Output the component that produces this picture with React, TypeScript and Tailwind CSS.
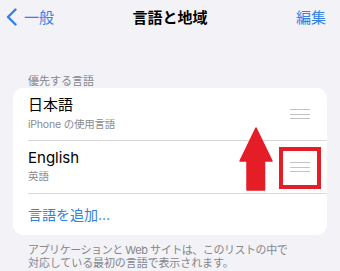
import React from 'react';

const font = { fontFamily: '"Inter", "Noto Sans CJK JP", sans-serif' };

function Handle() {
  return (
    <div className="flex w-[20px] flex-col gap-[3.5px]">
      <div className="h-[1px] bg-[#c4c4c8]" />
      <div className="h-[1px] bg-[#c4c4c8]" />
      <div className="h-[1px] bg-[#c4c4c8]" />
    </div>
  );
}

export default function App() {
  return (
    <div
      className="relative h-[271px] w-[340px] overflow-hidden bg-[#f2f2f7] text-black"
      style={font}
    >
      {/* ナビゲーションバー */}
      <header className="relative flex h-[34px] items-center justify-between pl-[6px] pr-[14px]">
        <div className="flex items-center gap-[6px] text-[#3380e6]">
          <svg width="12" height="18" viewBox="0 0 12 18" fill="none">
            <path d="M9.5 1.5 L2 9 L9.5 16.5" stroke="#3380e6" strokeWidth="2.4" strokeLinecap="round" strokeLinejoin="round" />
          </svg>
          <span className="text-[15px] leading-none">一般</span>
        </div>
        <h1 className="absolute left-1/2 -translate-x-1/2 text-[15px] font-bold leading-none">言語と地域</h1>
        <span className="text-[15px] leading-none text-[#3380e6]">編集</span>
      </header>

      {/* 優先する言語 */}
      <div className="mt-[40px] pl-[28px] text-[11px] leading-[14px] text-[#86868b]">優先する言語</div>

      <div className="mx-[13px] overflow-hidden rounded-[10px] bg-white">
        <div className="flex h-[52px] items-start justify-between pl-[15px] pr-[17px]">
          <div className="pt-[7px]">
            <div className="text-[15px] leading-[20px]">日本語</div>
            <div className="mt-[2px] text-[10.5px] leading-[16px] tracking-[-0.2px] text-[#8a8a8e]">iPhone の使用言語</div>
          </div>
          <div className="self-center">
            <Handle />
          </div>
        </div>
        <div className="ml-[15px] h-[1px] bg-[#d8d8dc]" />
        <div className="flex h-[52px] items-start justify-between pl-[15px] pr-[17px]">
          <div className="pt-[7px]">
            <div className="text-[15px] leading-[20px]">English</div>
            <div className="mt-[1px] text-[10.5px] leading-[16px] text-[#8a8a8e]">英語</div>
          </div>
          <div className="self-center">
            <Handle />
          </div>
        </div>
        <div className="ml-[15px] h-[1px] bg-[#d8d8dc]" />
        <div className="flex h-[41px] items-center pl-[15px]">
          <span className="text-[14px] leading-none text-[#3380e6]">言語を追加...</span>
        </div>
      </div>

      <p className="mt-[9px] whitespace-nowrap px-[28px] text-[11px] leading-[12.5px] tracking-[-0.1px] text-[#86868b]">
        <span className="tracking-[-0.45px]">アプリケーションと Web サイトは、このリストの中で</span>
        <br />
        対応している最初の言語で表示されます。
      </p>

      {/* 注釈: 矢印と枠 */}
      <svg className="absolute left-0 top-0" width="340" height="271" viewBox="0 0 340 271">
        <polygon
          points="256,128 272,161 264.5,161 264.5,190 247,190 247,161 240,161"
          fill="#e51d26"
          stroke="#e51d26"
          strokeWidth="1.5"
          strokeLinejoin="round"
        />
      </svg>
      <div className="absolute left-[279px] top-[147px] h-[42px] w-[42px] border-4 border-[#e51d26]" />
    </div>
  );
}
